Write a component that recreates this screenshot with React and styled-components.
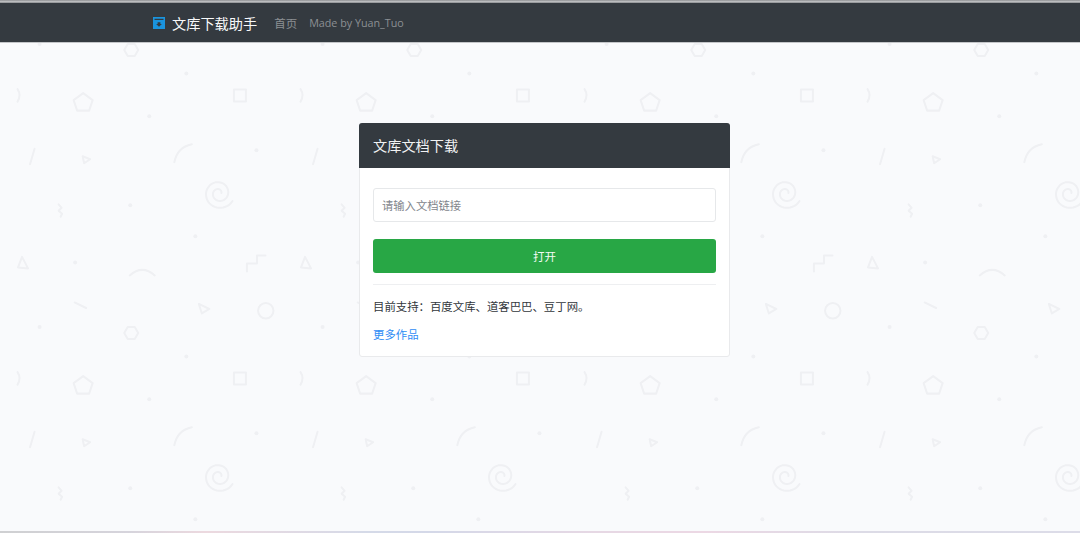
import React from 'react';
import styled, { createGlobalStyle } from 'styled-components';

const STROKE = '#eff0f3';

// spiral of the texture: winds out from the middle to a tail at the lower right
const spiralPath = () => {
  const points = [];
  for (let i = 0; i <= 80; i++) {
    const t = i / 80;
    const angle = ((30 + (1 - t) * 1.9 * 360) * Math.PI) / 180;
    const r = 2.5 + t * 13.2;
    points.push(`${(218.5 + r * Math.cos(angle)).toFixed(1)} ${(193 + r * Math.sin(angle)).toFixed(1)}`);
  }
  return `M${points.join('L')}`;
};

// one tile of the doodle texture, y runs from page y=40
const doodles = `
<svg xmlns='http://www.w3.org/2000/svg' width='283.5' height='283.5' viewBox='0 40 283.5 283.5'>
<g fill='none' stroke='${STROKE}' stroke-width='2' stroke-linecap='round' stroke-linejoin='round'>
<path d='M124 50l3.500-6h7l3.500 6-3.500 6h-7z'/>
<path d='M83 93l9.500 7-3.500 10.500h-12l-3.500-10.500z'/>
<path d='M233.500 89.500h12v12h-12z'/>
<path d='M17.500 89q4 6 0 12.500'/>
<path d='M34.500 148.500l-4.500 15.500'/>
<path d='M82.500 156l7.500 3-6 4z'/>
<path d='M174 162q3-15 17.500-18'/>
<path d='${spiralPath()}'/>
<path d='M58.500 204l3 3.500-3 3 3.500 3-1.500 3'/>
<path d='M22 256.500l6 11.500-10-1z'/>
<path d='M129.500 275q12.500-11 25 0'/>
<path d='M246.500 271v-8h10v-8h8.500'/>
<path d='M74.500 302l11.500 5.500'/>
<path d='M198.500 303.500l10.500 5-7.500 4.500z'/>
<circle cx='265.300' cy='310.300' r='7.700'/>
</g>
<g fill='${STROKE}'>
<circle cx='39.500' cy='44' r='2'/>
<circle cx='186' cy='73.500' r='2'/>
<circle cx='149' cy='116' r='2'/>
<circle cx='256' cy='150' r='2'/>
<circle cx='130' cy='205' r='2'/>
<circle cx='195' cy='236' r='2'/>
<circle cx='75' cy='262' r='2'/>
</g>
</svg>`;

const GlobalStyle = createGlobalStyle`
  html, body {
    margin: 0;
    height: 100%;
    overflow: hidden;
  }
  body {
    font-family: "Open Sans", "Noto Sans CJK SC", sans-serif;
    font-size: 12px;
    color: #343a40;
    background: #f9fafc;
  }
  #root {
    height: 100%;
  }
`;

const Page = styled.div`
  height: 533px;
  display: flex;
  flex-direction: column;
  background-color: #f9fafc;
  background-image: url("data:image/svg+xml,${encodeURIComponent(doodles)}");
  background-position: 0 40px;
`;

const TopEdge = styled.div`
  height: 3px;
  background: linear-gradient(#8d8f92 0, #c9cacc 66%, #6b6f73 100%);
`;

const Navbar = styled.nav`
  height: 39px;
  flex: none;
  display: flex;
  align-items: center;
  padding-left: 153px;
  background: #343a40;
  border-bottom: 1px solid #c4c6c9;
`;

const Brand = styled.a`
  display: flex;
  align-items: center;
  gap: 7px;
  color: #f8f9fa;
  font-size: 14.2px;
  font-family: "Noto Sans CJK SC", sans-serif;
`;

const NavLink = styled.a`
  color: #8c9094;
  font-size: ${(p) => p.$size}px;
  margin-left: ${(p) => p.$gap}px;
`;

const Main = styled.main`
  flex: 1;
  padding: 80px 0 0 359px;
`;

const Card = styled.section`
  width: 371px;
  height: 234px;
  box-sizing: border-box;
  background: #fff;
  border: 1px solid #e9eaec;
  border-radius: 3px;
`;

const CardHeader = styled.h2`
  margin: -1px -1px 0;
  height: 45px;
  padding: 0 0 2px 14px;
  box-sizing: border-box;
  display: flex;
  align-items: center;
  background: #343a40;
  border-radius: 3px 3px 0 0;
  color: #f1f2f3;
  font-size: 14.2px;
  font-weight: 400;
  font-family: "Noto Sans CJK SC", sans-serif;
`;

const CardBody = styled.div`
  padding: 20px 13px 0;
`;

const LinkInput = styled.input`
  display: block;
  width: 100%;
  height: 34px;
  box-sizing: border-box;
  padding: 0 8px;
  border: 1px solid #e6e8ea;
  border-radius: 3px;
  background: #fff;
  font-size: 11.3px;
  font-family: "Noto Sans CJK SC", sans-serif;
  &::placeholder {
    color: #7f858b;
  }
`;

const OpenButton = styled.button`
  display: block;
  width: 100%;
  height: 34px;
  margin-top: 17px;
  border: 0;
  border-radius: 3px;
  background: #28a745;
  color: #f4fbf5;
  font-size: 11.5px;
  font-family: "Noto Sans CJK SC", sans-serif;
`;

const Divider = styled.hr`
  margin: 11px 0 0;
  border: 0;
  border-top: 1px solid #eeeff1;
`;

const Note = styled.p`
  margin: 12px 0 0;
  line-height: 18px;
  font-size: 11.4px;
  color: #32373c;
  font-family: "Noto Sans CJK SC", sans-serif;
`;

const MoreLink = styled.a`
  display: block;
  margin-top: 10px;
  line-height: 18px;
  font-size: 11.4px;
  color: #2f8df5;
  font-family: "Noto Sans CJK SC", sans-serif;
`;

const BottomEdge = styled.div`
  height: 2px;
  flex: none;
  background: linear-gradient(
    90deg,
    #cfd0d2 0,
    #d6d4dc 12%,
    #ecd9df 19%,
    #d5dae8 34%,
    #d4d8e8 40%,
    #e6d8e4 55%,
    #ecd8e4 65%,
    #dcdbe6 80%,
    #dcdce8 100%
  );
`;

const BoxIcon = () => (
  <svg width="12" height="12" viewBox="0 0 12 12" aria-hidden="true">
    <path fill="#1a94de" d="M0 0h12v12H0z" />
    <path fill="#343a40" d="M1.500 1.800h9v1.300h-9zM4.600 5.200h2.800v1.900h1.500L6 9.800 3.100 7.100h1.500z" />
  </svg>
);

export default function App() {
  return (
    <>
      <GlobalStyle />
      <Page>
        <TopEdge />
        <Navbar>
          <Brand>
            <BoxIcon />
            文库下载助手
          </Brand>
          <NavLink $gap={17} $size={11.5}>首页</NavLink>
          <NavLink $gap={12} $size={10.75}>Made by Yuan_Tuo</NavLink>
        </Navbar>
        <Main>
          <Card>
            <CardHeader>文库文档下载</CardHeader>
            <CardBody>
              <LinkInput placeholder="请输入文档链接" />
              <OpenButton>打开</OpenButton>
              <Divider />
              <Note>目前支持：百度文库、道客巴巴、豆丁网。</Note>
              <MoreLink>更多作品</MoreLink>
            </CardBody>
          </Card>
        </Main>
        <BottomEdge />
      </Page>
    </>
  );
}
